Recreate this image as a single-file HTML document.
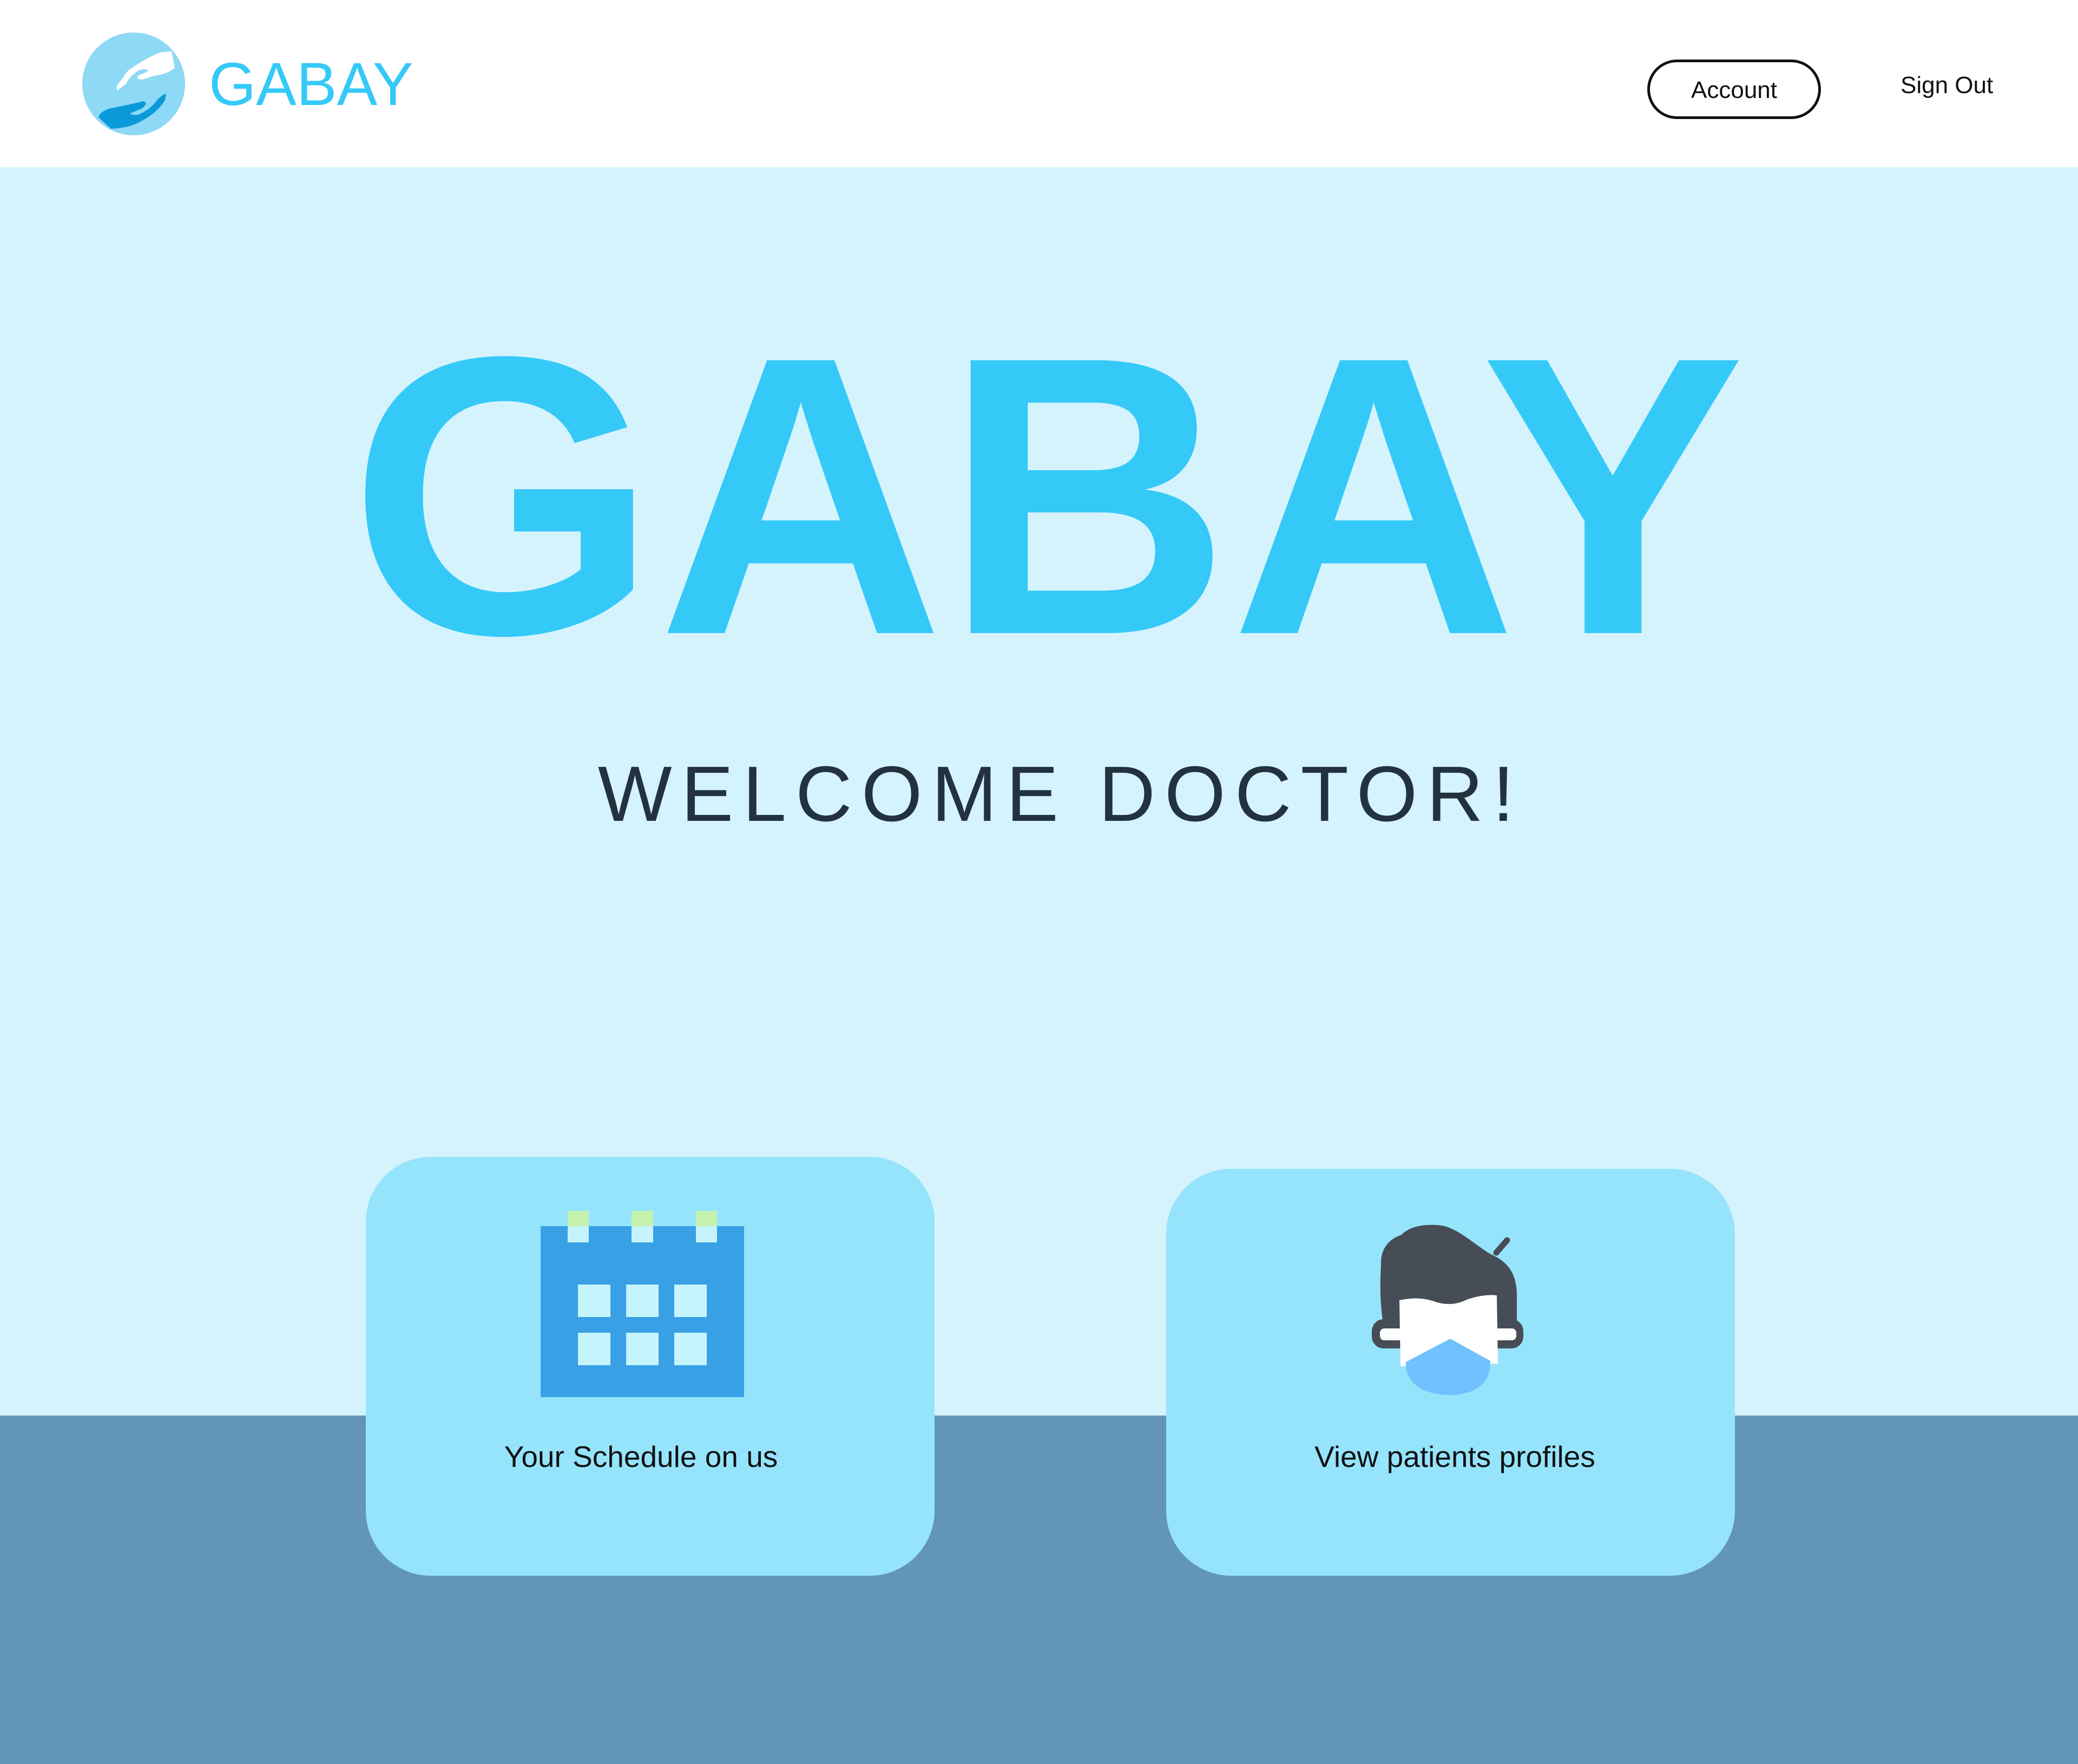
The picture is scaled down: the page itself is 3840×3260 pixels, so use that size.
<!DOCTYPE html>
<html><head><meta charset="utf-8"><style>
*{margin:0;padding:0;box-sizing:border-box}
body{width:3840px;height:3260px;position:relative;overflow:hidden;background:#D5F3FD;font-family:"Liberation Sans",sans-serif}
.abs{position:absolute}
.hdr{left:0;top:0;width:3840px;height:309px;background:#fff}
.bot{left:0;top:2616px;width:3840px;height:644px;background:#6395B7}
.card{background:#95E4FC;border-radius:120px}
.ct{font-size:55px;color:#111;width:1051px;text-align:center}
.sq{background:#C6F4FD}
</style></head><body>
<div class="abs hdr"></div>
<svg class="abs" style="left:145px;top:55px" width="200" height="200" viewBox="0 0 200 200">
<circle cx="102" cy="100" r="95" fill="#8ED9F6"/>
<path d="M70 105 L92 75 Q120 55 150 42 L172 40 L178 70 Q165 82 140 85 L118 92 Q105 92 110 85 L130 76 Q122 70 110 76 Q95 85 88 100 L72 112 Z" fill="#fff"/>
<path d="M37 162 Q40 150 60 145 Q95 138 120 132 Q130 135 118 145 L95 155 Q105 160 115 155 Q135 145 145 130 Q155 120 162 118 L160 130 Q145 155 110 172 Q90 182 60 183 Z" fill="#0A9AD9"/>
</svg>
<div class="abs" style="left:386px;top:100px;font-size:112px;color:#35C9F8;line-height:112px">GABAY</div>
<div class="abs" style="left:3044px;top:110px;width:321px;height:110px;border:5px solid #111;border-radius:55px;font-size:44px;line-height:104px;text-align:center;color:#111">Account</div>
<div class="abs" style="left:3512px;top:130px;font-size:44px;color:#111;line-height:56px">Sign Out</div>
<div class="abs" style="left:0;top:550px;width:3840px;text-align:center;font-size:733px;line-height:733px;color:#35C9F8;font-weight:bold;padding-left:30px">GABAY</div>
<div class="abs" style="left:0;top:1392px;width:3840px;text-align:center;font-size:145px;line-height:150px;color:#22333F;letter-spacing:17px;padding-left:80px">WELCOME DOCTOR!</div>
<div class="abs bot"></div>
<div class="abs card" style="left:676px;top:2138px;width:1051px;height:774px"></div>
<div class="abs card" style="left:2155px;top:2160px;width:1051px;height:752px"></div>
<div class="abs" style="left:999px;top:2266px;width:376px;height:316px;background:#3AA0E5"></div>
<div class="abs" style="left:1049px;top:2238px;width:39px;height:28px;background:#C6F2AE"></div>
<div class="abs" style="left:1167px;top:2238px;width:40px;height:28px;background:#C6F2AE"></div>
<div class="abs" style="left:1286px;top:2238px;width:39px;height:28px;background:#C6F2AE"></div>
<div class="abs sq" style="left:1049px;top:2266px;width:39px;height:30px"></div>
<div class="abs sq" style="left:1167px;top:2266px;width:40px;height:30px"></div>
<div class="abs sq" style="left:1286px;top:2266px;width:39px;height:30px"></div>
<div class="abs sq" style="left:1068px;top:2374px;width:60px;height:60px"></div>
<div class="abs sq" style="left:1157px;top:2374px;width:60px;height:60px"></div>
<div class="abs sq" style="left:1246px;top:2374px;width:60px;height:60px"></div>
<div class="abs sq" style="left:1068px;top:2463px;width:60px;height:60px"></div>
<div class="abs sq" style="left:1157px;top:2463px;width:60px;height:60px"></div>
<div class="abs sq" style="left:1246px;top:2463px;width:60px;height:60px"></div>
<svg class="abs" style="left:2520px;top:2240px" width="320" height="350" viewBox="0 0 320 350">
<rect x="15" y="198" width="280" height="54" rx="22" fill="#464D57"/>
<path d="M32 100 C30 70 45 50 70 42 C85 25 120 20 150 26 C180 35 205 60 235 78 C275 95 284 125 283 160 L283 205 L36 205 C30 170 30 130 32 100Z" fill="#464D57"/>
<line x1="245" y1="75" x2="265" y2="52" stroke="#464D57" stroke-width="11" stroke-linecap="round"/>
<path d="M66 163 C90 158 110 158 130 165 C150 172 170 172 190 162 C210 155 230 152 246 154 L248 280 L68 285 Z" fill="#fff"/>
<rect x="30" y="215" width="252" height="22" rx="8" fill="#fff"/>
<path d="M78 277 L160 234 L234 275 C236 320 200 338 160 338 C115 338 76 320 78 277Z" fill="#70C1FD"/>
</svg>
<div class="abs ct" style="left:659px;top:2660px">Your Schedule on us</div>
<div class="abs ct" style="left:2163px;top:2660px">View patients profiles</div>
</body></html>
